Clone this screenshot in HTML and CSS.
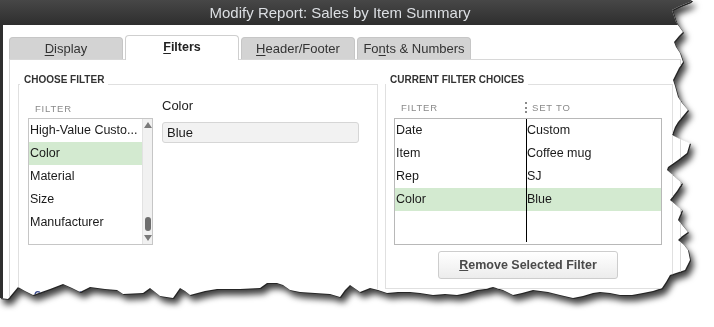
FILE: index.html
```html
<!DOCTYPE html>
<html lang="en">
<head>
    <meta charset="UTF-8">
    <meta name="viewport" content="width=device-width, initial-scale=1.0">
    <title>Modify Report: Sales by Item Summary</title>
    <link rel="stylesheet" href="styles.css">
</head>
<body>
    <div class="torn-shadow">
        <div class="window">
            <div class="titlebar">Modify Report: Sales by Item Summary</div>

            <div class="window-body">
                <div class="tabs">
                    <div class="tab"><u>D</u>isplay</div>
                    <div class="tab active"><u>F</u>ilters</div>
                    <div class="tab"><u>H</u>eader/Footer</div>
                    <div class="tab">Fo<u>n</u>ts &amp; Numbers</div>
                </div>

                <div class="panel">
                    <fieldset class="group choose">
                        <legend>Choose Filter</legend>
                        <div class="choose-row">
                            <div class="filter-col">
                                <div class="col-head">Filter</div>
                                <div class="listbox">
                                    <div class="list-items">
                                        <div class="item">High-Value Custo...</div>
                                        <div class="item selected">Color</div>
                                        <div class="item">Material</div>
                                        <div class="item">Size</div>
                                        <div class="item">Manufacturer</div>
                                    </div>
                                    <div class="scrollbar">
                                        <div class="arrow up"></div>
                                        <div class="track"><div class="thumb"></div></div>
                                        <div class="arrow down"></div>
                                    </div>
                                </div>
                            </div>
                            <div class="value-col">
                                <div class="value-label">Color</div>
                                <div class="value-input">Blue</div>
                            </div>
                        </div>
                        <fieldset class="group sub">
                            <legend>Columns</legend>
                        </fieldset>
                    </fieldset>

                    <fieldset class="group current">
                        <legend>Current Filter Choices</legend>
                        <div class="table-head">
                            <div class="th first">Filter</div>
                            <div class="th second"><span class="grip"></span>Set To</div>
                        </div>
                        <div class="choices">
                            <div class="choice-col names">
                                <div class="cell">Date</div>
                                <div class="cell">Item</div>
                                <div class="cell">Rep</div>
                                <div class="cell selected">Color</div>
                            </div>
                            <div class="choice-col values">
                                <div class="cell">Custom</div>
                                <div class="cell">Coffee mug</div>
                                <div class="cell">SJ</div>
                                <div class="cell selected">Blue</div>
                            </div>
                        </div>
                        <div class="button-row">
                            <button type="button" class="btn"><u>R</u>emove Selected Filter</button>
                        </div>
                    </fieldset>
                </div>
            </div>
        </div>
    </div>
</body>
</html>
```

FILE: styles.css
```css
* {
    margin: 0;
    padding: 0;
    box-sizing: border-box;
}

body {
    font-family: 'Liberation Sans', Arial, sans-serif;
    background: #fff;
    color: #1a1a1a;
    width: 714px;
    height: 327px;
    overflow: hidden;
}

/* torn paper edge: shadow on the wrapper, the cut on the window */
.torn-shadow {
    width: 700px;
    height: 310px;
    filter: drop-shadow(1px 1px 0 #262626) drop-shadow(3px 5px 3px rgba(0, 0, 0, 0.75));
}

.window {
    width: 700px;
    height: 310px;
    background: #fff;
    overflow: hidden;
    clip-path: polygon(
        0 0, 692px 0, 690px 2px, 680px 6px, 672px 10px, 674px 16px, 676px 22px, 678px 25px,
        683px 32px, 679px 36px, 674px 42px, 676px 47px, 680px 53px, 683px 62px, 679px 68px,
        676px 74px, 673px 80px, 675px 86px, 678px 97px, 682px 103px, 688px 110px, 683px 116px,
        678px 122px, 675px 127px, 672px 135px, 680px 139px, 690px 143px, 687px 153px, 678px 160px,
        668px 167px, 667px 170px, 674px 176px, 682px 183px, 677px 191px, 670px 200px, 676px 205px,
        682px 210px, 678px 220px, 683px 226px, 688px 232px, 681px 237px, 678px 240px, 684px 245px,
        688px 250px, 690px 260px, 687px 266px, 685px 270px, 670px 275px, 666px 282px, 662px 288px,
        653px 291px, 643px 293px, 632px 295px, 620px 295px, 610px 293px, 600px 292px, 593px 293px,
        583px 296px, 573px 298px, 560px 295px, 548px 292px, 533px 290px, 522px 293px, 513px 295px,
        503px 290px, 493px 287px, 485px 289px, 477px 290px, 467px 293px, 457px 295px, 445px 294px,
        433px 295px, 420px 293px, 410px 292px, 398px 292px, 387px 293px, 378px 290px, 370px 288px,
        365px 290px, 360px 292px, 350px 285px, 345px 290px, 340px 297px, 330px 294px, 315px 293px,
        300px 292px, 290px 290px, 283px 285px, 277px 283px, 267px 283px, 260px 288px, 240px 289px,
        217px 289px, 205px 291px, 190px 295px, 185px 291px, 180px 288px, 173px 298px, 160px 296px,
        155px 292px, 150px 288px, 143px 293px, 123px 294px, 117px 290px, 105px 289px, 90px 287px,
        80px 292px, 72px 288px, 63px 284px, 50px 289px, 33px 295px, 25px 291px, 18px 287px,
        8px 299px, 0 298px
    );
}

.titlebar {
    height: 25px;
    line-height: 25px;
    padding-right: 20px;
    text-align: center;
    font-size: 15px;
    color: #dcdfe3;
    background: linear-gradient(#474747, #2e2e2e);
}

.window-body {
    border-left: 3px solid #2f2f2f;
    height: 285px;
    padding-top: 9px;
}

.tabs {
    display: flex;
    align-items: flex-end;
    gap: 2px;
    padding-left: 6px;
    height: 25px;
    position: relative;
    z-index: 1;
}

.tab {
    width: 114px;
    height: 22px;
    line-height: 22px;
    text-align: center;
    font-size: 13px;
    color: #333;
    background: #d3d3d3;
    border: 1px solid #c6c6c6;
    border-bottom: none;
    border-radius: 4px 4px 0 0;
}

.tab.active {
    height: 25px;
    line-height: 23px;
    margin-bottom: -1px;
    background: #fff;
    border-color: #cfcfcf;
    font-weight: bold;
    font-size: 12.5px;
    color: #222;
}

.tab u {
    text-decoration-thickness: 1px;
    text-underline-offset: 2px;
}

.panel {
    margin-left: 6px;
    width: 672px;
    height: 260px;
    border: 1px solid #d8d8d8;
    padding: 15px 0 0 8px;
    display: flex;
    align-items: flex-start;
    gap: 7px;
}

.group {
    border: 1px solid #e0e0e0;
    min-width: 0;
}

.group legend {
    margin-left: -8px;
    padding: 0 4px 8px;
    font-size: 10px;
    line-height: 10px;
    font-weight: bold;
    text-transform: uppercase;
    color: #333;
}

.choose {
    width: 360px;
    height: 240px;
    padding: 0 0 0 9px;
}

.choose-row {
    display: flex;
    gap: 9px;
    padding-top: 2px;
}

.filter-col {
    width: 125px;
}

.col-head {
    height: 23px;
    display: flex;
    align-items: flex-end;
    padding: 0 0 3px 7px;
    font-size: 9.5px;
    line-height: 13px;
    letter-spacing: 0.8px;
    text-transform: uppercase;
    color: #8a8a8a;
}

.listbox {
    display: flex;
    height: 127px;
    border: 1px solid #c6c6c6;
}

.list-items {
    flex: 1;
}

.item {
    height: 23px;
    line-height: 23px;
    padding-left: 1px;
    font-size: 12.5px;
    white-space: nowrap;
    overflow: hidden;
}

.selected {
    background: #d3ead0;
}

.scrollbar {
    width: 10px;
    display: flex;
    flex-direction: column;
    align-items: center;
    background: #f1f1f1;
    border-left: 1px solid #e2e2e2;
}

.arrow {
    width: 0;
    height: 0;
    margin: 3px 0;
    border-left: 4px solid transparent;
    border-right: 4px solid transparent;
}

.arrow.up {
    border-bottom: 6px solid #7a7a7a;
}

.arrow.down {
    border-top: 6px solid #7a7a7a;
}

.track {
    flex: 1;
    display: flex;
    align-items: flex-end;
    padding-bottom: 1px;
}

.thumb {
    width: 6px;
    height: 14px;
    border-radius: 3px;
    background: #6e6e6e;
}

.value-col {
    width: 197px;
    padding-top: 3px;
}

.value-label {
    font-size: 13px;
    line-height: 16px;
    color: #222;
}

.value-input {
    margin-top: 8px;
    height: 21px;
    line-height: 19px;
    padding-left: 4px;
    font-size: 13px;
    background: #f2f2f2;
    border: 1px solid #d6d6d6;
    border-radius: 3px;
}

.group.sub {
    margin-top: 46px;
    margin-left: -2px;
    width: 330px;
    height: 40px;
}

.group.sub legend {
    margin-left: 2px;
    padding-left: 5px;
    color: #3a4a8a;
}

.current {
    width: 288px;
    height: 214px;
    padding: 0 0 0 8px;
}

.table-head {
    display: flex;
    align-items: flex-end;
    height: 25px;
    padding-bottom: 4px;
    font-size: 9.5px;
    line-height: 13px;
    letter-spacing: 0.8px;
    text-transform: uppercase;
    color: #8a8a8a;
}

.th.first {
    width: 131px;
    padding-left: 7px;
}

.th.second {
    display: flex;
    align-items: center;
}

.grip {
    width: 2px;
    height: 11px;
    margin-right: 5px;
    border-left: 2px dotted #8a8a8a;
}

.choices {
    display: flex;
    width: 268px;
    height: 127px;
    border: 1px solid #b8b8b8;
}

.choice-col.names {
    width: 131px;
}

.choice-col.values {
    flex: 1;
    border-left: 1px solid #000;
    margin-bottom: 2px;
}

.cell {
    height: 23px;
    line-height: 23px;
    padding-left: 1px;
    font-size: 12.5px;
}

.choice-col.values .cell {
    padding-left: 0;
}

.button-row {
    width: 268px;
    display: flex;
    justify-content: center;
    padding-top: 6px;
}

.btn {
    width: 180px;
    height: 28px;
    font-family: inherit;
    font-size: 12.5px;
    font-weight: bold;
    color: #4a4a4a;
    background: linear-gradient(#ffffff, #ececec);
    border: 1px solid #cdcdcd;
    border-radius: 3px;
}
```
